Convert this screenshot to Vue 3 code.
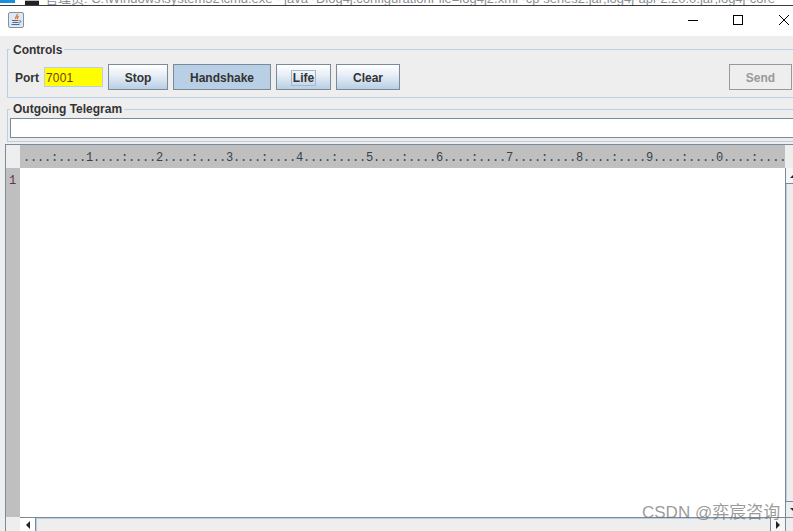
<script setup>
const ruler = '....:....1....:....2....:....3....:....4....:....5....:....6....:....7....:....8....:....9....:....0....:....'
</script>

<template>
  <div class="app">
    <div class="behind">
      <div class="blue"></div>
      <div class="cmd"></div>
      <span class="behind-text">管理员: C:\Windows\system32\cmd.exe - java -Dlog4j.configurationFile=log4j2.xml -cp series2.jar;log4j-api-2.20.0.jar;log4j-core</span>
    </div>
    <div class="titlebar">
      <div class="java-icon">
        <svg width="16" height="16" viewBox="0 0 16 16">
          <rect x="0.5" y="0.5" width="15" height="15" rx="1.5" fill="#dfe8f2" stroke="#7f93a8" />
          <path d="M9 2c1.2 1.6-2.4 2.8-1.2 5M10.6 4c-1.2.9-1.6 1.7-.8 3" fill="none" stroke="#e8701f" stroke-width="1.3" />
          <path d="M4 8.5h6.5M4.5 10.5h6M3.5 12.5h8" fill="none" stroke="#4d6c8a" stroke-width="1" />
          <path d="M11.5 8.5c2 0 1.8 2-.6 2.4" fill="none" stroke="#4d6c8a" stroke-width="1" />
        </svg>
      </div>
      <div class="win-btns">
        <svg width="12" height="12" viewBox="0 0 12 12"><path d="M1 6.5h10" stroke="#000" fill="none" /></svg>
        <svg width="12" height="12" viewBox="0 0 12 12"><rect x="1.5" y="1.5" width="9" height="9" stroke="#000" fill="none" /></svg>
        <svg width="12" height="12" viewBox="0 0 12 12"><path d="M1 1l10 10M11 1L1 11" stroke="#000" fill="none" /></svg>
      </div>
    </div>
    <div class="content">
      <fieldset class="group controls">
        <legend>Controls</legend>
        <div class="controls-row">
          <label class="port-label">Port</label>
          <div class="port-input">7001</div>
          <button class="btn stop">Stop</button>
          <button class="btn handshake">Handshake</button>
          <button class="btn life"><span class="focus">Life</span></button>
          <button class="btn clear">Clear</button>
          <button class="btn send" disabled>Send</button>
        </div>
      </fieldset>
      <fieldset class="group outgoing">
        <legend>Outgoing Telegram</legend>
        <div class="telegram-input"></div>
      </fieldset>
      <div class="editor">
        <div class="corner"></div>
        <div class="ruler">{{ ruler }}</div>
        <div class="corner-right"></div>
        <div class="gutter">1</div>
        <div class="text-area"></div>
        <div class="vscroll">
          <div class="arrow-btn up"><i></i></div>
          <div class="track"></div>
          <div class="arrow-btn down"><i></i></div>
        </div>
        <div class="corner-bottom"></div>
        <div class="hscroll">
          <div class="arrow-btn left"><i></i></div>
          <div class="track-h"></div>
          <div class="arrow-btn right"><i></i></div>
        </div>
      </div>
    </div>
    <div class="watermark">CSDN @弈宸咨询</div>
  </div>
</template>

<style>
html, body { margin: 0; overflow: hidden; background: #eeeeee; }
</style>

<style scoped>
.app {
  position: relative;
  width: 793px;
  height: 531px;
  overflow: hidden;
  font-family: "Liberation Sans", Arial, sans-serif;
  background: #eeeeee;
}
.behind {
  height: 5px;
  background: #fff;
  border-bottom: 1px solid #3c3c3c;
  display: flex;
  overflow: hidden;
  white-space: nowrap;
}
.blue { flex: none; width: 15px; height: 3px; background: #1a8fdc; }
.cmd { flex: none; width: 14px; height: 5px; margin-left: 10px; background: #222; border-top: 1px solid #bbb; box-sizing: border-box; }
.behind-text {
  flex: none;
  margin-left: 6px;
  margin-top: -9px;
  font: 13px/15px "Liberation Sans", "Noto Sans CJK SC", sans-serif;
  color: #8a8f94;
}
.titlebar {
  height: 30px;
  background: #fff;
  display: flex;
  align-items: flex-start;
  justify-content: space-between;
}
.java-icon { margin: 6px 0 0 8px; height: 16px; }
.win-btns { display: flex; gap: 33px; margin: 8px 3px 0 0; }
.win-btns svg { display: block; }
.win-btns svg:last-child { margin-left: 1px; }
.content { padding-top: 5px; }
.group {
  margin: 0 0 0 7px;
  padding: 0;
  border: 1px solid #b8cfe5;
  min-width: 0;
  box-sizing: border-box;
}
.group legend {
  margin-left: 2px;
  padding: 0 2px 0 3px;
  font-size: 12px;
  font-weight: 700;
  line-height: 14px;
  color: #333333;
}
.controls { width: 786px; height: 57px; border-right: 0; }
.controls legend { padding-top: 2px; }
.controls-row { display: flex; align-items: flex-start; padding-top: 7px; height: 26px; }
.port-label { font-size: 12px; font-weight: 700; color: #333; margin: 7px 5px 0 7px; line-height: 14px; }
.port-input {
  width: 59px;
  height: 20px;
  box-sizing: border-box;
  margin-top: 3px;
  background: #ffff00;
  border: 1px solid #b8cfe5;
  font-size: 12px;
  line-height: 20px;
  padding-left: 1px;
  color: #7a3a10;
  letter-spacing: 0.2px;
}
.btn {
  height: 26px;
  box-sizing: border-box;
  margin: 0;
  padding: 1px 0 0;
  border: 1px solid #7a8a99;
  font: 700 12px "Liberation Sans", Arial, sans-serif;
  color: #333333;
  background: linear-gradient(#ffffff, #e9eff6 40%, #b8cfe5);
  display: flex;
  align-items: center;
  justify-content: center;
}
.stop { width: 60px; margin-left: 5px; }
.handshake { width: 98px; margin-left: 5px; background: #b8cfe5; }
.life { width: 55px; margin-left: 5px; }
.focus { border: 1px solid #a3b8cc; padding: 1px; line-height: 12px; }
.clear { width: 64px; margin-left: 5px; }
.send {
  width: 63px;
  margin-left: auto;
  margin-right: 1px;
  background: #eeeeee;
  border-color: #999999;
  color: #999999;
}
.outgoing { width: 786px; height: 40px; margin-top: 4px; border-right: 0; }
.telegram-input {
  margin-left: 2px;
  margin-top: 2px;
  height: 20px;
  box-sizing: border-box;
  background: #fff;
  border: 1px solid #7a8a99;
  border-right: 0;
}
.editor {
  margin: 2px 0 0 5px;
  height: 387px;
  display: grid;
  grid-template-columns: 14px 765px 1fr;
  grid-template-rows: 23px 349px 14px;
  border-top: 1px solid #7a8a99;
  border-left: 1px solid #7a8a99;
  box-sizing: border-box;
}
.corner { background: #eeeeee; }
.ruler {
  background: #bfbfbf;
  font: 12px/27px "Liberation Mono", monospace;
  color: #37444f;
  overflow: hidden;
  white-space: pre;
  padding-left: 3px;
  letter-spacing: -0.2px;
}
.gutter {
  background: #bfbfbf;
  font: 12px/26px "Liberation Mono", monospace;
  color: #6a2f4f;
  padding-left: 3px;
}
.text-area { background: #fff; }
.vscroll { display: flex; flex-direction: column; border-left: 1px solid #7a8a99; }
.track { flex: 1; background: #eeeeee; border-left: 1px solid #b8cfe5; }
.arrow-btn {
  flex: none;
  width: 100%;
  height: 15px;
  background: #eeeeee;
  display: flex;
  align-items: center;
  justify-content: center;
  box-sizing: border-box;
}
.arrow-btn i { display: block; flex: none; width: 0; height: 0; border: 4px solid transparent; }
.vscroll .arrow-btn { justify-content: flex-start; padding-left: 4px; }
.vscroll .up { height: 16px; background: #f6f6f6; border-bottom: 1px solid #7a8a99; }
.up i { border-bottom-color: #222; border-top-width: 0; }
.down i { border-top-color: #222; border-bottom-width: 0; }
.vscroll .down { height: 16px; border-top: 1px solid #7a8a99; }
.corner-bottom { background: #eeeeee; }
.hscroll { display: flex; border-top: 1px solid #7a8a99; grid-column: 2 / 4; }
.hscroll .arrow-btn { height: 13px; width: 16px; }
.hscroll .left { background: #fff; border-right: 1px solid #7a8a99; }
.left i { border-right-color: #222; border-left-width: 0; }
.right i { border-left-color: #222; border-right-width: 0; }
.hscroll .right { width: 16px; border-left: 1px solid #7a8a99; border-right: 1px solid #7a8a99; background: #f6f6f6; }
.track-h { width: 734px; background: #eeeeee; border-top: 1px solid #b8cfe5; border-left: 1px solid #b8cfe5; box-sizing: border-box; }
.watermark {
  position: absolute;
  left: 642px;
  top: 503px;
  font: 17px/20px "Liberation Sans", "Noto Sans CJK SC", sans-serif;
  color: rgba(110, 110, 110, 0.7);
  white-space: nowrap;
}
</style>
